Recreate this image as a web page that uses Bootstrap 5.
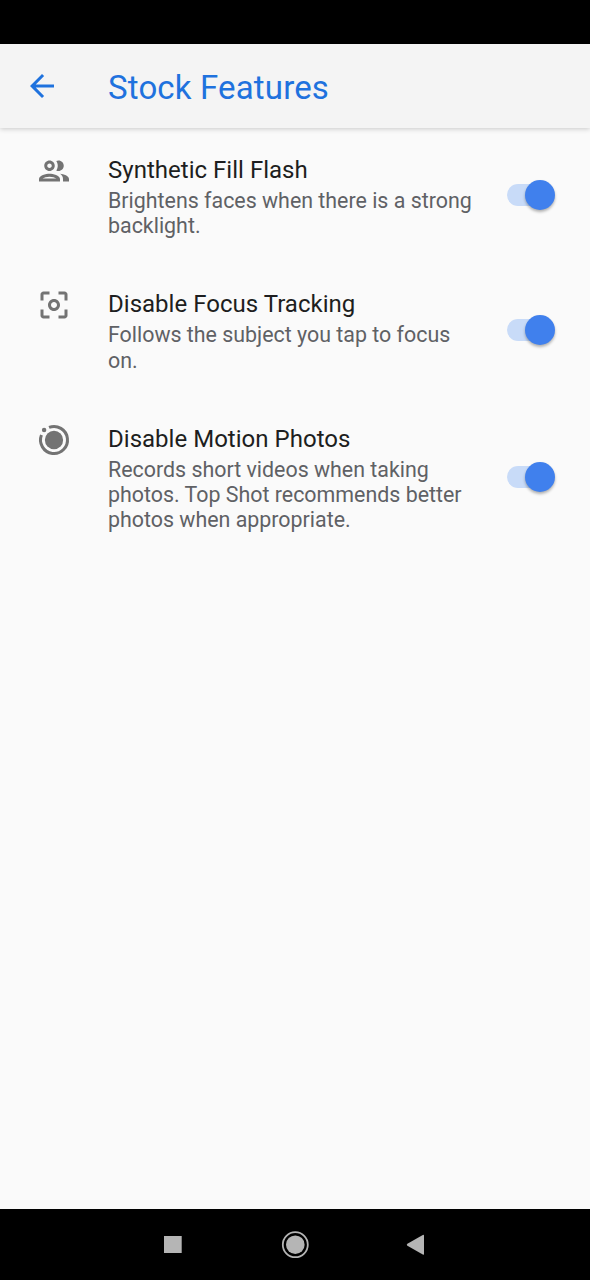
<!DOCTYPE html>
<html lang="en">
<head>
<meta charset="utf-8">
<meta name="viewport" content="width=device-width, initial-scale=1">
<title>Stock Features</title>
<link href="https://cdn.jsdelivr.net/npm/bootstrap@5.3.0/dist/css/bootstrap.min.css" rel="stylesheet">
<style>
  body { font-family: Roboto, sans-serif; background: #fafafa; height: 1280px; overflow: hidden; }
  .status-bar { height: 44px; }
  .app-bar { height: 84px; padding: 0 24px; background: #f4f4f4; color: #1f72de; box-shadow: 0 1px 5px rgba(0,0,0,.2); }
  .back-icon { width: 36px; height: 36px; margin: 0 48px 0 0; }
  .app-title { font-size: 33px; line-height: 40px; padding-top: 3px; letter-spacing: .16px; }
  .pref { padding: 27.5px 35px 24.3px 36px; }
  .pref-icon { width: 36px; height: 36px; margin: -3px 36px 0 0; fill: #737373; }
  .pref-text { width: 371px; color: #5f6165; font-size: 21.4px; line-height: 25.2px; }
  .pref-name { color: #1d1e20; font-size: 24px; line-height: 28px; margin-bottom: 4.3px; letter-spacing: .02px; }
  .toggle { width: 48px; height: 22px; margin-bottom: 3px; border-radius: 11px; background: linear-gradient(90deg, #c8dbf8 40px, transparent 40px); }
  .toggle-thumb { width: 30px; height: 30px; background: #4080ed; box-shadow: 0 2px 3px rgba(0,0,0,.3); }
  .nav-keys { height: 71px; }
</style>
</head>
<body class="d-flex flex-column">
<div class="status-bar bg-black flex-shrink-0"></div>
<header class="app-bar d-flex align-items-center flex-shrink-0">
  <svg class="back-icon" viewBox="0 0 24 24" fill="currentColor" aria-label="Back"><path d="M20 11H7.83l5.59-5.59L12 4l-8 8 8 8 1.41-1.41L7.83 13H20v-2z"/></svg>
  <h1 class="app-title fw-normal mb-0">Stock Features</h1>
</header>
<main class="flex-grow-1">
  <section class="pref d-flex">
    <svg class="pref-icon flex-shrink-0" viewBox="0 0 24 24"><path d="M9 13.75c-2.34 0-7 1.17-7 3.5V19h14v-1.75c0-2.33-4.66-3.5-7-3.5zM4.34 17c.84-.58 2.87-1.25 4.66-1.25s3.82.67 4.66 1.25H4.34zM9 12c1.93 0 3.5-1.57 3.5-3.5S10.93 5 9 5 5.5 6.57 5.5 8.5 7.07 12 9 12zm0-5c.83 0 1.5.67 1.5 1.5S9.83 10 9 10s-1.5-.67-1.5-1.5S8.17 7 9 7zm7.04 6.81c1.16.84 1.96 1.96 1.96 3.44V19h4v-1.75c0-2.02-3.5-3.17-5.96-3.44zM15 12c1.93 0 3.5-1.57 3.5-3.5S16.93 5 15 5c-.54 0-1.04.13-1.5.35.63.89 1 1.98 1 3.15s-.37 2.26-1 3.15c.46.22.96.35 1.5.35z"/></svg>
    <div class="pref-text flex-shrink-0">
      <h2 class="pref-name fw-normal">Synthetic Fill Flash</h2>
      <p class="mb-0">Brightens faces when there is a strong backlight.</p>
    </div>
    <div class="toggle d-flex align-items-center justify-content-end ms-auto align-self-center" role="switch" aria-checked="true"><span class="toggle-thumb rounded-circle"></span></div>
  </section>
  <section class="pref d-flex">
    <svg class="pref-icon flex-shrink-0" viewBox="0 0 24 24"><path d="M5 15H3v4c0 1.1.9 2 2 2h4v-2H5v-4zM5 5h4V3H5c-1.1 0-2 .9-2 2v4h2V5zm14-2h-4v2h4v4h2V5c0-1.1-.9-2-2-2zm0 16h-4v2h4c1.1 0 2-.9 2-2v-4h-2v4zM12 8c-2.21 0-4 1.79-4 4s1.79 4 4 4 4-1.79 4-4-1.79-4-4-4zm0 6c-1.1 0-2-.9-2-2s.9-2 2-2 2 .9 2 2-.9 2-2 2z"/></svg>
    <div class="pref-text flex-shrink-0">
      <h2 class="pref-name fw-normal">Disable Focus Tracking</h2>
      <p class="mb-0">Follows the subject you tap to focus on.</p>
    </div>
    <div class="toggle d-flex align-items-center justify-content-end ms-auto align-self-center" role="switch" aria-checked="true"><span class="toggle-thumb rounded-circle"></span></div>
  </section>
  <section class="pref d-flex">
    <svg class="pref-icon flex-shrink-0" viewBox="0 0 24 24"><circle cx="12" cy="12" r="6.1"/><circle cx="5.4" cy="5.4" r="1.5"/><path d="M8.7 3.63A9 9 0 1 1 3.63 8.7" fill="none" stroke="#737373" stroke-width="2"/></svg>
    <div class="pref-text flex-shrink-0">
      <h2 class="pref-name fw-normal">Disable Motion Photos</h2>
      <p class="mb-0">Records short videos when taking photos. Top Shot recommends better photos when appropriate.</p>
    </div>
    <div class="toggle d-flex align-items-center justify-content-end ms-auto align-self-center" role="switch" aria-checked="true"><span class="toggle-thumb rounded-circle"></span></div>
  </section>
</main>
<footer class="nav-keys bg-black flex-shrink-0">
  <svg class="d-block" width="590" height="71" viewBox="0 0 590 71" fill="#b5b5b5">
    <rect x="164" y="27" width="17.7" height="17"/>
    <circle cx="295.3" cy="35.7" r="9.3"/>
    <circle cx="295.3" cy="35.7" r="12.5" fill="none" stroke="#b5b5b5" stroke-width="1.8"/>
    <path d="M407.4 34.8 422.8 26q1.2-.5 1.2.6V44.900q0 1.200-1.200.6L407.400 36.700q-1.300-1 0-1.900z"/>
  </svg>
</footer>
<script src="https://cdn.jsdelivr.net/npm/bootstrap@5.3.0/dist/js/bootstrap.bundle.min.js"></script>
</body>
</html>
